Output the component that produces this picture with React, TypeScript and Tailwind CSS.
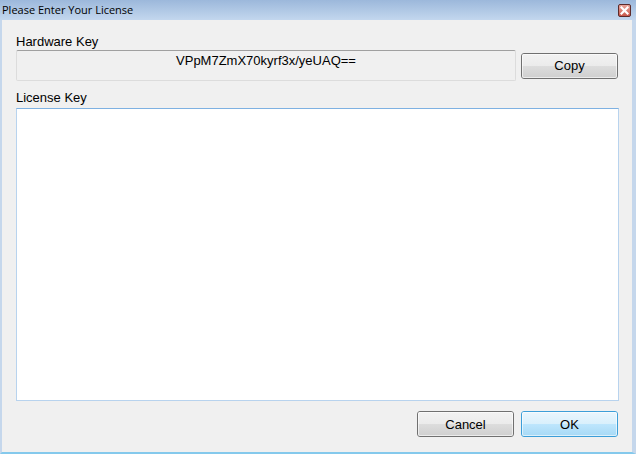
import React from 'react';

const Button: React.FC<{ label: string; primary?: boolean }> = ({ label, primary }) => (
  <button
    className={`relative w-[97px] h-[26px] rounded-[3px] border text-[13px] leading-[15px] text-black overflow-hidden ${
      primary ? 'border-[#3c9ed8] bg-[#d6eefc]' : 'border-[#707070] bg-[#e5e5e5]'
    }`}
  >
    <span
      className={`absolute inset-x-0 top-0 h-1/2 ${
        primary ? 'bg-gradient-to-b from-[#eaf6fd] to-[#d9f0fc]' : 'bg-gradient-to-b from-[#f2f2f2] to-[#ebebeb]'
      }`}
    />
    <span
      className={`absolute inset-x-0 bottom-0 h-1/2 ${
        primary ? 'bg-gradient-to-b from-[#bee6fd] to-[#a7d9f5]' : 'bg-gradient-to-b from-[#dddddd] to-[#cfcfcf]'
      }`}
    />
    <span className="absolute inset-0 rounded-[2px] border border-white/60" />
    <span className="relative">{label}</span>
  </button>
);

export default function App() {
  return (
    <div
      className="w-[636px] h-[454px] flex flex-col bg-[#f0f0f0]"
      style={{ fontFamily: '"Liberation Sans", Arial, sans-serif' }}
    >
      {/* Title bar */}
      <div className="h-[20px] flex items-center justify-between bg-gradient-to-b from-[#9cb8db] to-[#c3d7ee] pl-[2px] pr-[5px]">
        <span
          className="text-[11px] leading-[14px] text-black"
          style={{ fontFamily: '"Open Sans", "Noto Sans", sans-serif' }}
        >
          Please Enter Your License
        </span>
        <div className="w-[13px] h-[13px] mt-[1px] rounded-[2px] border border-[#5c2a2a] bg-gradient-to-b from-[#e8a49a] to-[#c8574b] flex items-center justify-center">
          <svg width="9" height="9" viewBox="0 0 9 9">
            <path d="M1.5 1.5 L7.5 7.5 M7.5 1.5 L1.5 7.5" stroke="#ffffff" strokeWidth="2.2" strokeLinecap="square" />
          </svg>
        </div>
      </div>

      {/* Body */}
      <div className="flex-1 flex flex-col border-l-2 border-r-4 border-b-2 border-l-[#c5d7ec] border-r-[#c5d7ec] border-b-[#84c9ec] pl-[14px] pr-[13px] pt-[14px]">
        <div className="text-[13px] leading-[15px] text-black">Hardware Key</div>
        <div className="flex items-center gap-[5px] mt-[1px]">
          <div className="w-[500px] h-[31px] rounded-[2px] border border-[#dcdcdc] border-t-[#a0a0a0] text-center pt-[2px] text-[13px] leading-[15px] text-black">
            VPpM7ZmX70kyrf3x/yeUAQ==
          </div>
          <Button label="Copy" />
        </div>

        <div className="text-[13px] leading-[15px] text-black mt-[9px]">License Key</div>
        <textarea className="mt-[3px] h-[293px] w-full resize-none bg-white border border-[#b8d3ee] border-t-[#7eb1e2] outline-none" />

        <div className="flex justify-end gap-[7px] mt-[10px] pr-[1px]">
          <Button label="Cancel" />
          <Button label="OK" primary />
        </div>
      </div>
    </div>
  );
}
